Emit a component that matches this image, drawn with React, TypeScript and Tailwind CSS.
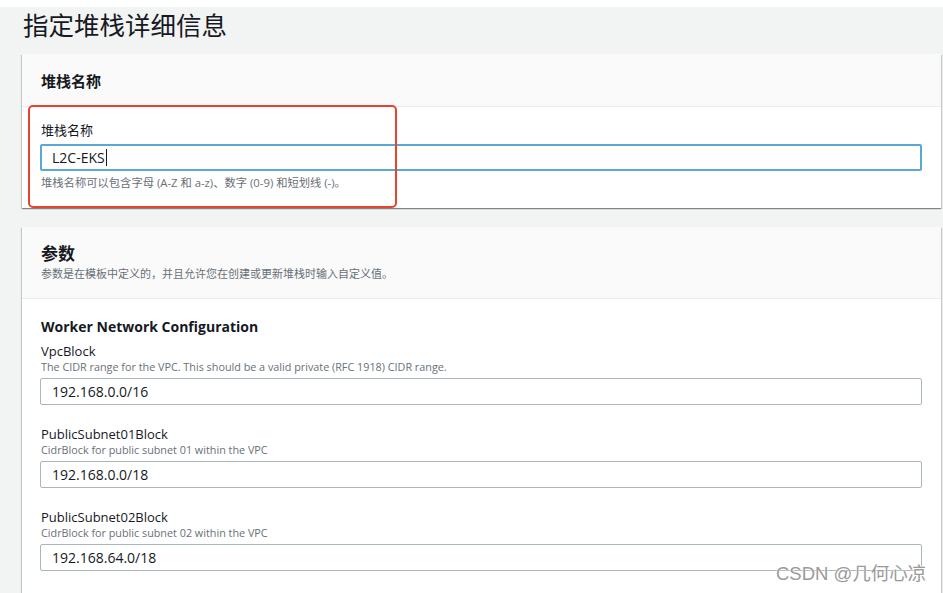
import React from "react";

const font = { fontFamily: '"Open Sans", "Noto Sans CJK SC", sans-serif' };

interface FieldProps {
  label: string;
  desc: string;
  value: string;
}

function Field({ label, desc, value }: FieldProps) {
  return (
    <div className="flex flex-col mb-[20px]">
      <div className="pl-[1px] text-[13px] leading-[18px] text-[#16191f]">{label}</div>
      <div className="pl-[1px] text-[10.8px] leading-[14px] text-[#687078]">{desc}</div>
      <div className="mt-[4px] h-[27px] border border-[#aab7b8] rounded-[2px] bg-white flex items-center pl-[11px] text-[14px] text-[#16191f]">
        {value}
      </div>
    </div>
  );
}

export default function App() {
  return (
    <div
      style={font}
      className="w-[943px] h-[593px] overflow-hidden bg-[#f2f3f3] relative"
    >
      <div className="h-[7px] bg-white" />

      {/* Title */}
      <h1 className="pl-[23px] pt-[1px] text-[25.5px] leading-[34px] text-[#16191f] font-normal">
        指定堆栈详细信息
      </h1>

      <div className="pl-[22px] pr-[2px] pt-[12px] flex flex-col gap-[19px]">
        {/* Stack name card */}
        <div className="relative bg-white shadow-[0_1px_1px_0_rgba(0,28,36,0.3),1px_1px_1px_0_rgba(0,28,36,0.15),-1px_1px_1px_0_rgba(0,28,36,0.15)]">
          <div className="h-[53px] bg-[#fafafa] border-b border-[#eaeded] pl-[19px] pt-[16px]">
            <h2 className="text-[15px] leading-[22px] font-bold text-[#16191f]">堆栈名称</h2>
          </div>
          <div className="pl-[18px] pr-[19px] pt-[13px] pb-[17px]">
            <div className="pl-[1px] text-[13px] leading-[20px] text-[#16191f]">堆栈名称</div>
            <div className="mt-[4px] h-[27px] border-2 border-[#5aa9d4] rounded-[2px] flex items-center pl-[10px] text-[14px] text-[#16191f]">
              L2C-EKS
              <span className="inline-block w-[1px] h-[17px] bg-[#16191f] ml-[1px]" />
            </div>
            <div className="pl-[1px] mt-[4px] text-[11.3px] leading-[16px] text-[#687078]">
              堆栈名称可以包含字母 (A-Z 和 a-z)、数字 (0-9) 和短划线 (-)。
            </div>
          </div>
          {/* annotation box */}
          <div className="absolute left-[6px] top-[51px] w-[369px] h-[103px] border-2 border-[#e8432d] rounded-[5px]" />
        </div>

        {/* Parameters card */}
        <div className="bg-white shadow-[0_1px_1px_0_rgba(0,28,36,0.3),1px_1px_1px_0_rgba(0,28,36,0.15),-1px_1px_1px_0_rgba(0,28,36,0.15)]">
          <div className="bg-[#fafafa] border-b border-[#eaeded] pl-[19px] pt-[15px] pb-[16px]">
            <h2 className="text-[17px] leading-[24px] font-bold text-[#16191f]">参数</h2>
            <div className="text-[11px] leading-[16px] text-[#687078]">
              参数是在模板中定义的，并且允许您在创建或更新堆栈时输入自定义值。
            </div>
          </div>
          <div className="pl-[18px] pr-[19px] pt-[18px]">
            <h3 className="pl-[1px] text-[14px] leading-[20px] font-bold text-[#16191f] mb-[5px]">
              Worker Network Configuration
            </h3>
            <Field
              label="VpcBlock"
              desc="The CIDR range for the VPC. This should be a valid private (RFC 1918) CIDR range."
              value="192.168.0.0/16"
            />
            <Field
              label="PublicSubnet01Block"
              desc="CidrBlock for public subnet 01 within the VPC"
              value="192.168.0.0/18"
            />
            <Field
              label="PublicSubnet02Block"
              desc="CidrBlock for public subnet 02 within the VPC"
              value="192.168.64.0/18"
            />
            <Field
              label="PrivateSubnet01Block"
              desc="CidrBlock for private subnet 01 within the VPC"
              value="192.168.128.0/18"
            />
          </div>
        </div>
      </div>

      {/* watermark */}
      <div
        className="absolute left-[776px] top-[562px] text-[18.5px] leading-[24px] text-[#9a9a9a] [text-shadow:0_0_2px_#ffffff,0_0_2px_#ffffff]"
        style={{ fontFamily: '"Liberation Sans", "Noto Sans CJK SC", sans-serif' }}
      >
        CSDN @几何心凉
      </div>
    </div>
  );
}
